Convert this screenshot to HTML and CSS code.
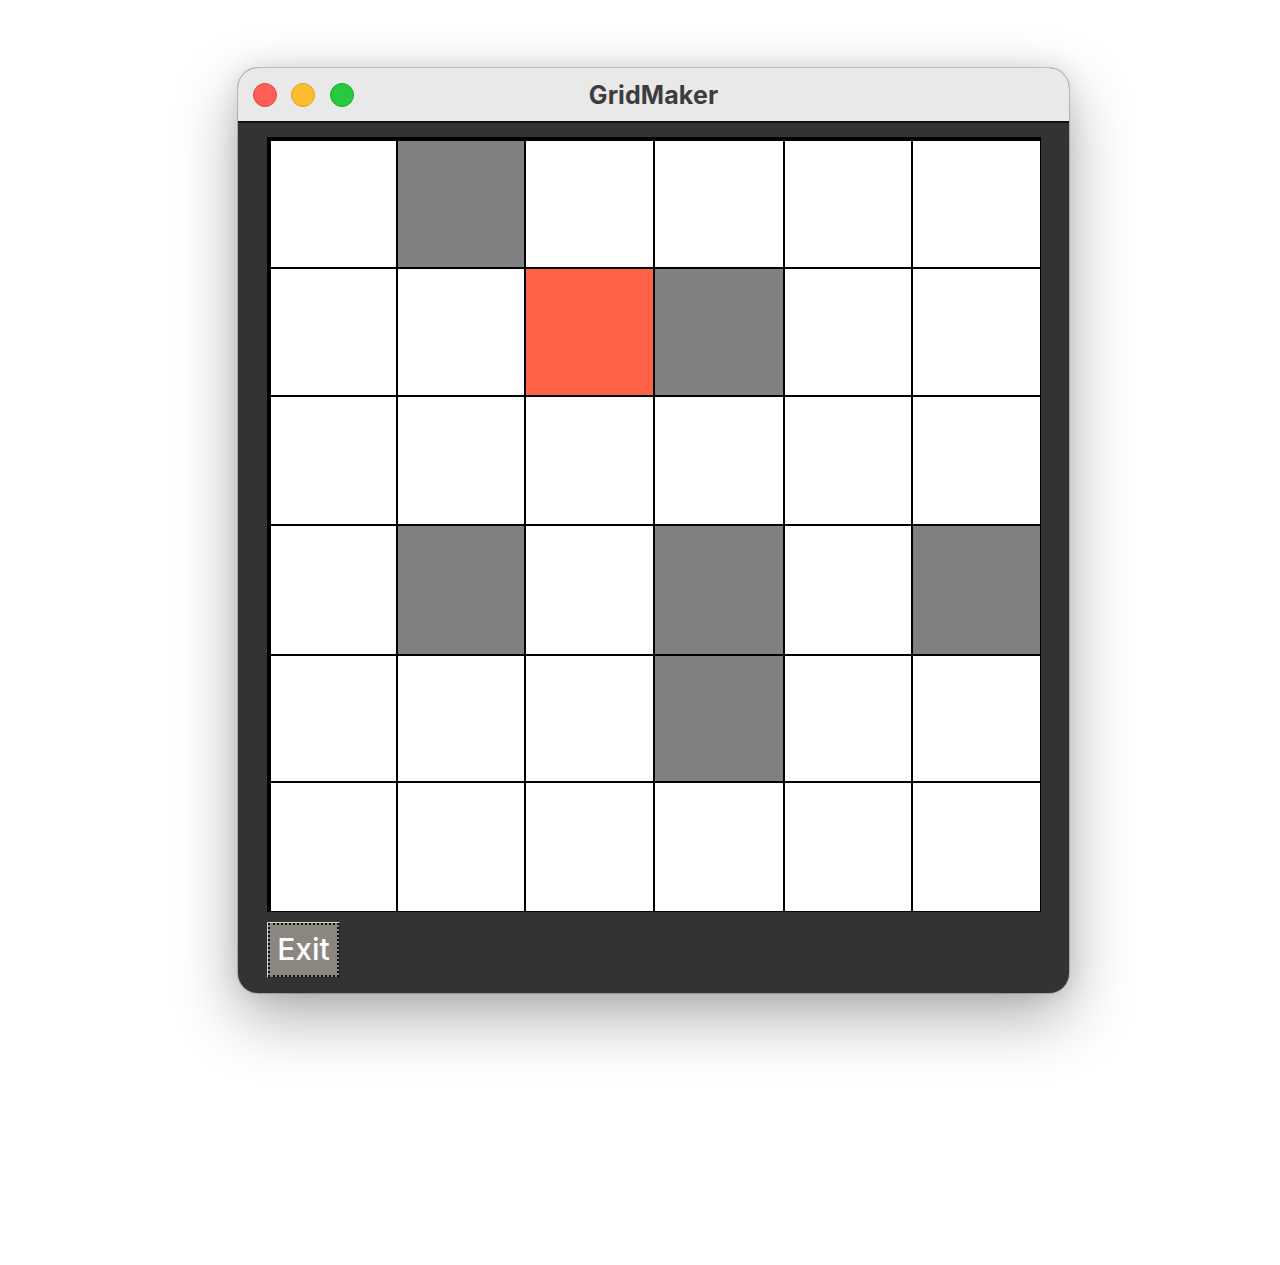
FILE: index.html
```html
<!DOCTYPE html>
<html>
<head>
<meta charset="utf-8">
<title>GridMaker</title>
<link rel="stylesheet" href="styles.css">
</head>
<body>
<div class="window">
  <div class="titlebar">
    <div class="lights">
      <span class="light red"></span>
      <span class="light yellow"></span>
      <span class="light green"></span>
    </div>
    <div class="title">GridMaker</div>
  </div>
  <div class="content">
    <div class="grid">
      <div class="cell"></div><div class="cell gray"></div><div class="cell"></div><div class="cell"></div><div class="cell"></div><div class="cell"></div>
      <div class="cell"></div><div class="cell"></div><div class="cell red"></div><div class="cell gray"></div><div class="cell"></div><div class="cell"></div>
      <div class="cell"></div><div class="cell"></div><div class="cell"></div><div class="cell"></div><div class="cell"></div><div class="cell"></div>
      <div class="cell"></div><div class="cell gray"></div><div class="cell"></div><div class="cell gray"></div><div class="cell"></div><div class="cell gray"></div>
      <div class="cell"></div><div class="cell"></div><div class="cell"></div><div class="cell gray"></div><div class="cell"></div><div class="cell"></div>
      <div class="cell"></div><div class="cell"></div><div class="cell"></div><div class="cell"></div><div class="cell"></div><div class="cell"></div>
    </div>
    <button class="exit"><span class="exit-inner">Exit</span></button>
  </div>
</div>
</body>
</html>
```
FILE: styles.css
```css
html, body {
  margin: 0;
  padding: 0;
  background: #ffffff;
}
body {
  padding-top: 68px;
  padding-left: 238px;
  height: 1265px;
  box-sizing: border-box;
}
.window {
  width: 831px;
  border-radius: 20px;
  overflow: hidden;
  background: #333333;
  box-shadow: 0 0 0 1px rgba(0,0,0,0.18), 0 24px 64px rgba(0,0,0,0.32), 0 0 24px rgba(0,0,0,0.10);
}
.titlebar {
  height: 53px;
  background: #e9e9e9;
  border-bottom: 2px solid #111;
  display: flex;
  align-items: center;
  position: relative;
}
.lights {
  display: flex;
  gap: 14.7px;
  padding-left: 14.7px;
}
.light {
  width: 24px;
  height: 24px;
  border-radius: 50%;
  box-sizing: border-box;
  display: block;
}
.light.red { background: #ff5f57; border: 1px solid #e2463f; }
.light.yellow { background: #febc2e; border: 1px solid #e1a116; }
.light.green { background: #28c840; border: 1px solid #14ae2a; }
.title {
  position: absolute;
  left: 0;
  right: 0;
  top: 0;
  bottom: 0;
  display: flex;
  align-items: center;
  justify-content: center;
  font-family: Inter, "Liberation Sans", sans-serif;
  font-weight: 700;
  font-size: 25px;
  letter-spacing: 0.1px;
  color: #3d3d3d;
  padding-top: 1px;
}
.content {
  padding: 14px 28px 15px 29px;
}
.grid {
  width: 774px;
  height: 775px;
  box-sizing: border-box;
  background: #000;
  padding: 4px 1px 1px 4px;
  display: grid;
  grid-template-columns: 125px 126px 127px 128px 126px 127px;
  grid-template-rows: 126px 126px 127px 128px 125px 128px;
  gap: 2px;
}
.cell { background: #ffffff; }
.cell.gray { background: #808080; }
.cell.red { background: #ff6347; }
.exit {
  margin-top: 10px;
  display: block;
  width: 73px;
  height: 56px;
  padding: 0;
  box-sizing: border-box;
  background: #8b8680;
  border: 1px solid;
  border-color: #d9d6d2 #2a2a2a #2a2a2a #d9d6d2;
  font-family: Inter, "Liberation Sans", Arial, sans-serif;
  font-weight: 500;
  font-size: 30px;
  color: #ffffff;
  cursor: default;
}
.exit-inner {
  display: flex;
  align-items: center;
  justify-content: center;
  width: 100%;
  height: 100%;
  box-sizing: border-box;
  border: 2px dotted #111;
  padding-bottom: 2px;
}
```
